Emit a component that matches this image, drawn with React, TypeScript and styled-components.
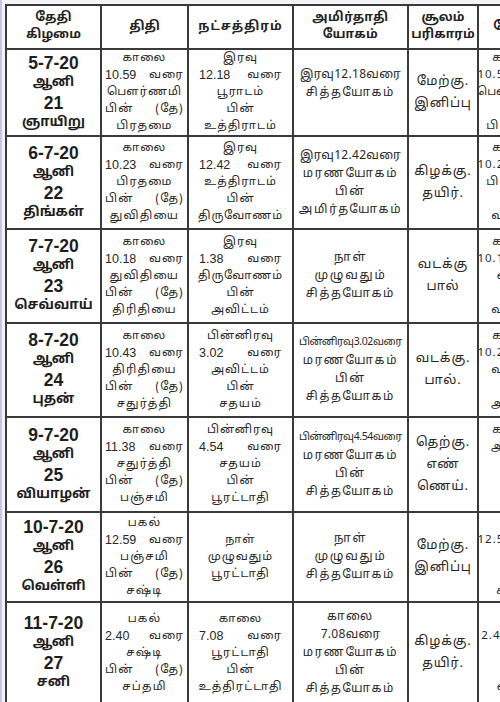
import React from 'react';
import styled, { createGlobalStyle } from 'styled-components';

const GlobalStyle = createGlobalStyle`
  html, body {
    margin: 0;
    padding: 0;
    background: #f4f4f8;
    overflow: hidden;
  }
  body {
    font-family: "Noto Sans Tamil", "Latha", "Lohit Tamil", "Noto Sans", "DejaVu Sans", sans-serif;
    color: #262626;
  }
`;

const Page = styled.div`
  width: 500px;
  height: 702px;
  overflow: hidden;
  padding: 4px 0 0 3px;
  box-sizing: border-box;
  border-left: 2px solid #c6c6e4;
`;

const Grid = styled.div`
  display: grid;
  grid-template-columns: 93px 85px 103px 113px 68px 70px;
  grid-template-rows: 42px 85px 91px 92px 92px 93px 88px 100px;
  gap: 2px;
  padding: 2px;
  background: #3a3a3a;
  width: max-content;
`;

const Box = styled.div`
  background: #fff;
  display: flex;
  flex-direction: column;
  align-items: stretch;
  justify-content: center;
  text-align: center;
  white-space: nowrap;
  overflow: hidden;
`;

const Head = styled(Box)<{ spacing?: number }>`
  font-size: 12.5px;
  font-weight: 700;
  line-height: 17px;
  letter-spacing: ${(p) => p.spacing ?? 0}px;
  color: #222;
`;

const Cell = styled(Box)<{ size: number; spacing: number; pad: number; lh?: number }>`
  padding: 0 ${(p) => p.pad}px;
  font-size: ${(p) => p.size}px;
  letter-spacing: ${(p) => p.spacing}px;
  line-height: ${(p) => p.lh ?? 17}px;
`;

const DateCell = styled(Box)`
  line-height: 20px;
`;

const DateLine = styled.div<{ num?: boolean }>`
  font-size: ${(p) => (p.num ? '17.5px' : '13.5px')};
  font-family: ${(p) => (p.num ? '"Liberation Sans", Arial, sans-serif' : 'inherit')};
  font-weight: 700;
  color: #1e1e1e;
`;

const Line = styled.div<{ spread?: boolean }>`
  display: flex;
  justify-content: ${(p) => (p.spread ? 'space-between' : 'center')};
`;

const Num = styled.span`
  font-family: "Liberation Sans", Arial, sans-serif;
  font-size: 12.5px;
  letter-spacing: 0;
`;

const TimeLine = styled.div<{ small?: boolean }>`
  font-size: ${(p) => (p.small ? '10.5px' : '12px')};
  letter-spacing: ${(p) => (p.small ? '-0.4px' : '0.3px')};
`;

interface Row {
  date: [string, string, string, string];
  thithi: string[];
  star: string[];
  yogam: string[];
  soolam: string[];
  last: string[];
}

const rows: Row[] = [
  {
    date: ['5-7-20', 'ஆனி', '21', 'ஞாயிறு'],
    thithi: ['காலை', '10.59|வரை', 'பௌர்ணமி', 'பின்|(தே)', 'பிரதமை'],
    star: ['இரவு', '12.18|வரை', 'பூராடம்', 'பின்', 'உத்திராடம்'],
    yogam: ['இரவு12.18வரை', 'சித்தயோகம்', ''],
    soolam: ['மேற்கு.', 'இனிப்பு'],
    last: ['காலை', '10.59 வரை', 'பௌர்ணமி', '', 'பிரதமை'],
  },
  {
    date: ['6-7-20', 'ஆனி', '22', 'திங்கள்'],
    thithi: ['காலை', '10.23|வரை', 'பிரதமை', 'பின்|(தே)', 'துவிதியை'],
    star: ['இரவு', '12.42|வரை', 'உத்திராடம்', 'பின்', 'திருவோணம்'],
    yogam: ['இரவு12.42வரை', 'மரணயோகம்', 'பின்', 'அமிர்தயோகம்'],
    soolam: ['கிழக்கு.', 'தயிர்.'],
    last: ['காலை', '10.23 வரை', 'பிரதமை', '', 'வடக்கு'],
  },
  {
    date: ['7-7-20', 'ஆனி', '23', 'செவ்வாய்'],
    thithi: ['காலை', '10.18|வரை', 'துவிதியை', 'பின்|(தே)', 'திரிதியை'],
    star: ['இரவு', '1.38|வரை', 'திருவோணம்', 'பின்', 'அவிட்டம்'],
    yogam: ['நாள்', 'முழுவதும்', 'சித்தயோகம்'],
    soolam: ['வடக்கு', 'பால்'],
    last: ['காலை', '10.18 வரை', 'வரை', '', 'வடக்கு'],
  },
  {
    date: ['8-7-20', 'ஆனி', '24', 'புதன்'],
    thithi: ['காலை', '10.43|வரை', 'திரிதியை', 'பின்|(தே)', 'சதுர்த்தி'],
    star: ['பின்னிரவு', '3.02|வரை', 'அவிட்டம்', 'பின்', 'சதயம்'],
    yogam: ['பின்னிரவு3.02வரை', 'மரணயோகம்', 'பின்', 'சித்தயோகம்'],
    soolam: ['வடக்கு.', 'பால்.'],
    last: ['காலை', '10.28 வரை', 'வடக்கு', '', 'அமிர்த'],
  },
  {
    date: ['9-7-20', 'ஆனி', '25', 'வியாழன்'],
    thithi: ['காலை', '11.38|வரை', 'சதுர்த்தி', 'பின்|(தே)', 'பஞ்சமி'],
    star: ['பின்னிரவு', '4.54|வரை', 'சதயம்', 'பின்', 'பூரட்டாதி'],
    yogam: ['பின்னிரவு4.54வரை', 'மரணயோகம்', 'பின்', 'சித்தயோகம்'],
    soolam: ['தெற்கு.', 'எண்', 'ணெய்.'],
    last: ['காலை', 'அமிர்த', '', '', ''],
  },
  {
    date: ['10-7-20', 'ஆனி', '26', 'வெள்ளி'],
    thithi: ['பகல்', '12.59|வரை', 'பஞ்சமி', 'பின்|(தே)', 'சஷ்டி'],
    star: ['நாள்', 'முழுவதும்', 'பூரட்டாதி'],
    yogam: ['நாள்', 'முழுவதும்', 'சித்தயோகம்'],
    soolam: ['மேற்கு.', 'இனிப்பு'],
    last: ['', '12.59 வரை', '', '', 'சஷ்டி'],
  },
  {
    date: ['11-7-20', 'ஆனி', '27', 'சனி'],
    thithi: ['பகல்', '2.40|வரை', 'சஷ்டி', 'பின்|(தே)', 'சப்தமி'],
    star: ['காலை', '7.08|வரை', 'பூரட்டாதி', 'பின்', 'உத்திரட்டாதி'],
    yogam: ['காலை', '7.08வரை', 'மரணயோகம்', 'பின்', 'சித்தயோகம்'],
    soolam: ['கிழக்கு.', 'தயிர்.'],
    last: ['', '2.40 வரை', 'திதி', '', 'வரை'],
  },
];

const renderLine = (text: string, i: number) => {
  if (text.includes('|')) {
    const [a, b] = text.split('|');
    return (
      <Line key={i} spread>
        {/^[0-9.]+$/.test(a) ? <Num>{a}</Num> : <span>{a}</span>}
        <span>{b}</span>
      </Line>
    );
  }
  if (/[0-9]/.test(text) && text.endsWith('வரை') && !text.includes(' ')) {
    return (
      <TimeLine key={i} small={text.startsWith('பின்னிரவு')}>
        {text}
      </TimeLine>
    );
  }
  return <Line key={i}>{text || '\u00a0'}</Line>;
};

const App: React.FC = () => (
  <>
    <GlobalStyle />
    <Page>
      <Grid>
        <Head>
          <div>தேதி</div>
          <div>கிழமை</div>
        </Head>
        <Head>திதி</Head>
        <Head spacing={1}>நட்சத்திரம்</Head>
        <Head spacing={0.5}>
          <div>அமிர்தாதி</div>
          <div>யோகம்</div>
        </Head>
        <Head>
          <div>சூலம்</div>
          <div>பரிகாரம்</div>
        </Head>
        <Head>நேரம்</Head>
        {rows.map((r) => (
          <React.Fragment key={r.date[0]}>
            <DateCell>
              <DateLine num>{r.date[0]}</DateLine>
              <DateLine>{r.date[1]}</DateLine>
              <DateLine num>{r.date[2]}</DateLine>
              <DateLine>{r.date[3]}</DateLine>
            </DateCell>
            <Cell size={11.5} spacing={1.2} pad={3}>
              {r.thithi.map(renderLine)}
            </Cell>
            <Cell size={11.5} spacing={1} pad={10}>
              {r.star.map(renderLine)}
            </Cell>
            <Cell size={12} spacing={1.8} pad={2} lh={18}>
              {r.yogam.map(renderLine)}
            </Cell>
            <Cell size={13} spacing={0.8} pad={2} lh={22}>
              {r.soolam.map(renderLine)}
            </Cell>
            <Cell size={11.5} spacing={1} pad={2}>
              {r.last.map(renderLine)}
            </Cell>
          </React.Fragment>
        ))}
      </Grid>
    </Page>
  </>
);

export default App;
